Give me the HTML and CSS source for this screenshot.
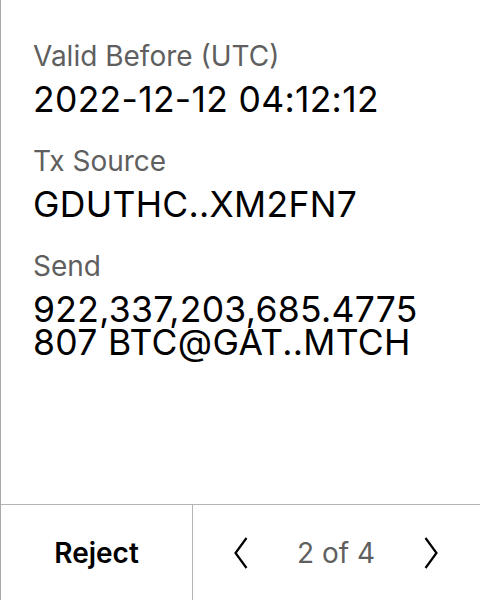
FILE: index.html
```html
<!DOCTYPE html>
<html>
<head>
<meta charset="utf-8">
<link rel="stylesheet" href="styles.css">
</head>
<body>
<div class="screen">
  <div class="content">
    <div class="field">
      <div class="label">Valid Before (UTC)</div>
      <div class="value">2022-12-12 04:12:12</div>
    </div>
    <div class="field">
      <div class="label">Tx Source</div>
      <div class="value">GDUTHC..XM2FN7</div>
    </div>
    <div class="field">
      <div class="label">Send</div>
      <div class="value">922,337,203,685.4775<br>807 BTC@GAT..MTCH</div>
    </div>
  </div>
  <div class="footer">
    <div class="reject">Reject</div>
    <div class="pager">
      <svg class="chev" width="14" height="34" viewBox="0 0 14 34"><path d="M12.5 2 L1.5 17 L12.5 32" fill="none" stroke="#000" stroke-width="2.2"/></svg>
      <span class="count">2 of 4</span>
      <svg class="chev" width="14" height="34" viewBox="0 0 14 34"><path d="M1.5 2 L12.5 17 L1.5 32" fill="none" stroke="#000" stroke-width="2.2"/></svg>
    </div>
  </div>
</div>
</body>
</html>
```
FILE: styles.css
```css
html, body {
  margin: 0;
  padding: 0;
  background: #fff;
}
body {
  font-family: Inter, "Noto Sans", sans-serif;
  color: #000;
}
.screen {
  width: 479px;
  height: 600px;
  border-left: 1px solid #a8a8a8;
  display: flex;
  flex-direction: column;
}
.content {
  flex: 1;
  padding: 39px 0 0 32px;
}
.field + .field {
  margin-top: 28px;
}
.label {
  font-size: 28px;
  line-height: 34px;
  color: #5f5f5f;
}
.value {
  font-size: 35.5px;
  line-height: 33px;
  margin-top: 10px;
  letter-spacing: 0.3px;
}
.footer {
  height: 95px;
  border-top: 1px solid #b4b4b4;
  display: flex;
}
.reject {
  width: 191px;
  border-right: 1px solid #b4b4b4;
  display: flex;
  align-items: center;
  justify-content: center;
  font-size: 28px;
  font-weight: 600;
}
.pager {
  flex: 1;
  display: flex;
  align-items: center;
  justify-content: space-between;
  padding: 0 42px 0 41px;
}
.count {
  font-size: 28px;
  color: #5f5f5f;
}
.chev {
  display: block;
}
```
